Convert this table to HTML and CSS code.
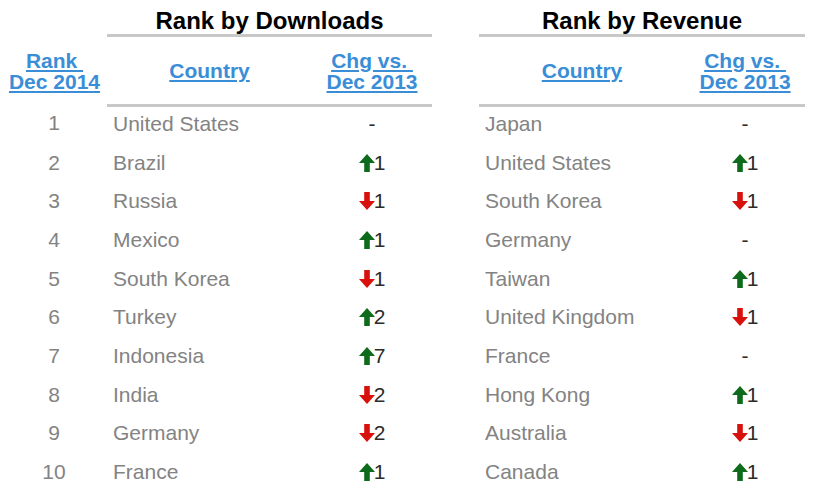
FILE: index.html
```html
<!DOCTYPE html>
<html>
<head>
<meta charset="utf-8">
<link rel="stylesheet" href="styles.css">
</head>
<body>
<div class="wrap">
  <table class="rank-table left">
    <colgroup><col class="c-rank"><col class="c-country"><col class="c-chg"></colgroup>
    <thead>
      <tr class="title-row"><th class="blank"></th><th colspan="2" class="title">Rank by Downloads</th></tr>
      <tr class="head-row">
        <th class="blank"><a href="#">Rank&nbsp;<br>Dec 2014</a></th>
        <th class="lined"><a href="#">Country</a></th>
        <th class="lined"><a href="#">Chg vs.&nbsp;<br>Dec 2013</a></th>
      </tr>
    </thead>
    <tbody>
      <tr><td class="rank">1</td><td class="country">United States</td><td class="chg">-</td></tr>
      <tr><td class="rank">2</td><td class="country">Brazil</td><td class="chg"><svg class="arrow up" viewBox="0 0 16 18"><polygon points="8,0 16,9 10.8,9 10.8,18 5.2,18 5.2,9 0,9"/></svg>1</td></tr>
      <tr><td class="rank">3</td><td class="country">Russia</td><td class="chg"><svg class="arrow down" viewBox="0 0 16 18"><polygon points="8,18 16,9 10.8,9 10.8,0 5.2,0 5.2,9 0,9"/></svg>1</td></tr>
      <tr><td class="rank">4</td><td class="country">Mexico</td><td class="chg"><svg class="arrow up" viewBox="0 0 16 18"><polygon points="8,0 16,9 10.8,9 10.8,18 5.2,18 5.2,9 0,9"/></svg>1</td></tr>
      <tr><td class="rank">5</td><td class="country">South Korea</td><td class="chg"><svg class="arrow down" viewBox="0 0 16 18"><polygon points="8,18 16,9 10.8,9 10.8,0 5.2,0 5.2,9 0,9"/></svg>1</td></tr>
      <tr><td class="rank">6</td><td class="country">Turkey</td><td class="chg"><svg class="arrow up" viewBox="0 0 16 18"><polygon points="8,0 16,9 10.8,9 10.8,18 5.2,18 5.2,9 0,9"/></svg>2</td></tr>
      <tr><td class="rank">7</td><td class="country">Indonesia</td><td class="chg"><svg class="arrow up" viewBox="0 0 16 18"><polygon points="8,0 16,9 10.8,9 10.8,18 5.2,18 5.2,9 0,9"/></svg>7</td></tr>
      <tr><td class="rank">8</td><td class="country">India</td><td class="chg"><svg class="arrow down" viewBox="0 0 16 18"><polygon points="8,18 16,9 10.8,9 10.8,0 5.2,0 5.2,9 0,9"/></svg>2</td></tr>
      <tr><td class="rank">9</td><td class="country">Germany</td><td class="chg"><svg class="arrow down" viewBox="0 0 16 18"><polygon points="8,18 16,9 10.8,9 10.8,0 5.2,0 5.2,9 0,9"/></svg>2</td></tr>
      <tr><td class="rank">10</td><td class="country">France</td><td class="chg"><svg class="arrow up" viewBox="0 0 16 18"><polygon points="8,0 16,9 10.8,9 10.8,18 5.2,18 5.2,9 0,9"/></svg>1</td></tr>
    </tbody>
  </table>

  <table class="rank-table right">
    <colgroup><col class="c-country r"><col class="c-chg"></colgroup>
    <thead>
      <tr class="title-row"><th colspan="2" class="title">Rank by Revenue</th></tr>
      <tr class="head-row">
        <th class="lined"><a href="#">Country</a></th>
        <th class="lined"><a href="#">Chg vs.&nbsp;<br>Dec 2013</a></th>
      </tr>
    </thead>
    <tbody>
      <tr><td class="country">Japan</td><td class="chg">-</td></tr>
      <tr><td class="country">United States</td><td class="chg"><svg class="arrow up" viewBox="0 0 16 18"><polygon points="8,0 16,9 10.8,9 10.8,18 5.2,18 5.2,9 0,9"/></svg>1</td></tr>
      <tr><td class="country">South Korea</td><td class="chg"><svg class="arrow down" viewBox="0 0 16 18"><polygon points="8,18 16,9 10.8,9 10.8,0 5.2,0 5.2,9 0,9"/></svg>1</td></tr>
      <tr><td class="country">Germany</td><td class="chg">-</td></tr>
      <tr><td class="country">Taiwan</td><td class="chg"><svg class="arrow up" viewBox="0 0 16 18"><polygon points="8,0 16,9 10.8,9 10.8,18 5.2,18 5.2,9 0,9"/></svg>1</td></tr>
      <tr><td class="country">United Kingdom</td><td class="chg"><svg class="arrow down" viewBox="0 0 16 18"><polygon points="8,18 16,9 10.8,9 10.8,0 5.2,0 5.2,9 0,9"/></svg>1</td></tr>
      <tr><td class="country">France</td><td class="chg">-</td></tr>
      <tr><td class="country">Hong Kong</td><td class="chg"><svg class="arrow up" viewBox="0 0 16 18"><polygon points="8,0 16,9 10.8,9 10.8,18 5.2,18 5.2,9 0,9"/></svg>1</td></tr>
      <tr><td class="country">Australia</td><td class="chg"><svg class="arrow down" viewBox="0 0 16 18"><polygon points="8,18 16,9 10.8,9 10.8,0 5.2,0 5.2,9 0,9"/></svg>1</td></tr>
      <tr><td class="country">Canada</td><td class="chg"><svg class="arrow up" viewBox="0 0 16 18"><polygon points="8,0 16,9 10.8,9 10.8,18 5.2,18 5.2,9 0,9"/></svg>1</td></tr>
    </tbody>
  </table>
</div>
</body>
</html>
```

FILE: styles.css
```css
html, body {
  margin: 0;
  padding: 0;
  background: #ffffff;
}
body {
  font-family: "Liberation Sans", Arial, Helvetica, sans-serif;
}
.wrap {
  display: flex;
  gap: 47px;
  align-items: flex-start;
}
.rank-table {
  border-collapse: collapse;
  table-layout: fixed;
}
.rank-table.left { width: 432px; }
.rank-table.right { width: 326px; }
.c-rank { width: 107px; }
.c-country { width: 205px; }
.c-country.r { width: 206px; }
.c-chg { width: 120px; }

.rank-table th, .rank-table td {
  padding: 0;
}
.title-row th {
  height: 34px;
  box-sizing: border-box;
  padding-top: 7px;
  line-height: 27px;
  vertical-align: top;
}
.title {
  font-size: 24px;
  font-weight: bold;
  color: #000;
  text-align: center;
  border-bottom: 3px solid #c8c8c8;
}
.head-row th {
  height: 67px;
  vertical-align: middle;
  text-align: center;
  font-size: 21px;
  line-height: 21px;
  font-weight: bold;
}
.head-row th.lined {
  border-bottom: 3px solid #c8c8c8;
}
.head-row a {
  color: #3a8ed8;
  text-decoration: underline;
  text-decoration-thickness: 1.5px;
  text-underline-offset: 2px;
}
.head-row th.blank a {
  position: relative;
  left: 1px;
}
.rank-table td {
  font-size: 21px;
  line-height: 33.67px;
  padding-bottom: 5px;
  color: #838383;
  white-space: nowrap;
}
.rank-table td.rank {
  text-align: center;
  padding-left: 1px;
}
.rank-table td.country {
  padding-left: 6px;
}
.rank-table td.chg {
  text-align: center;
  color: #2b2b2b;
}
.arrow {
  width: 16px;
  height: 18px;
  vertical-align: -2px;
  margin-right: -1px;
}
.arrow.up { fill: #0e6b1c; }
.arrow.down { fill: #d9110c; }
```
